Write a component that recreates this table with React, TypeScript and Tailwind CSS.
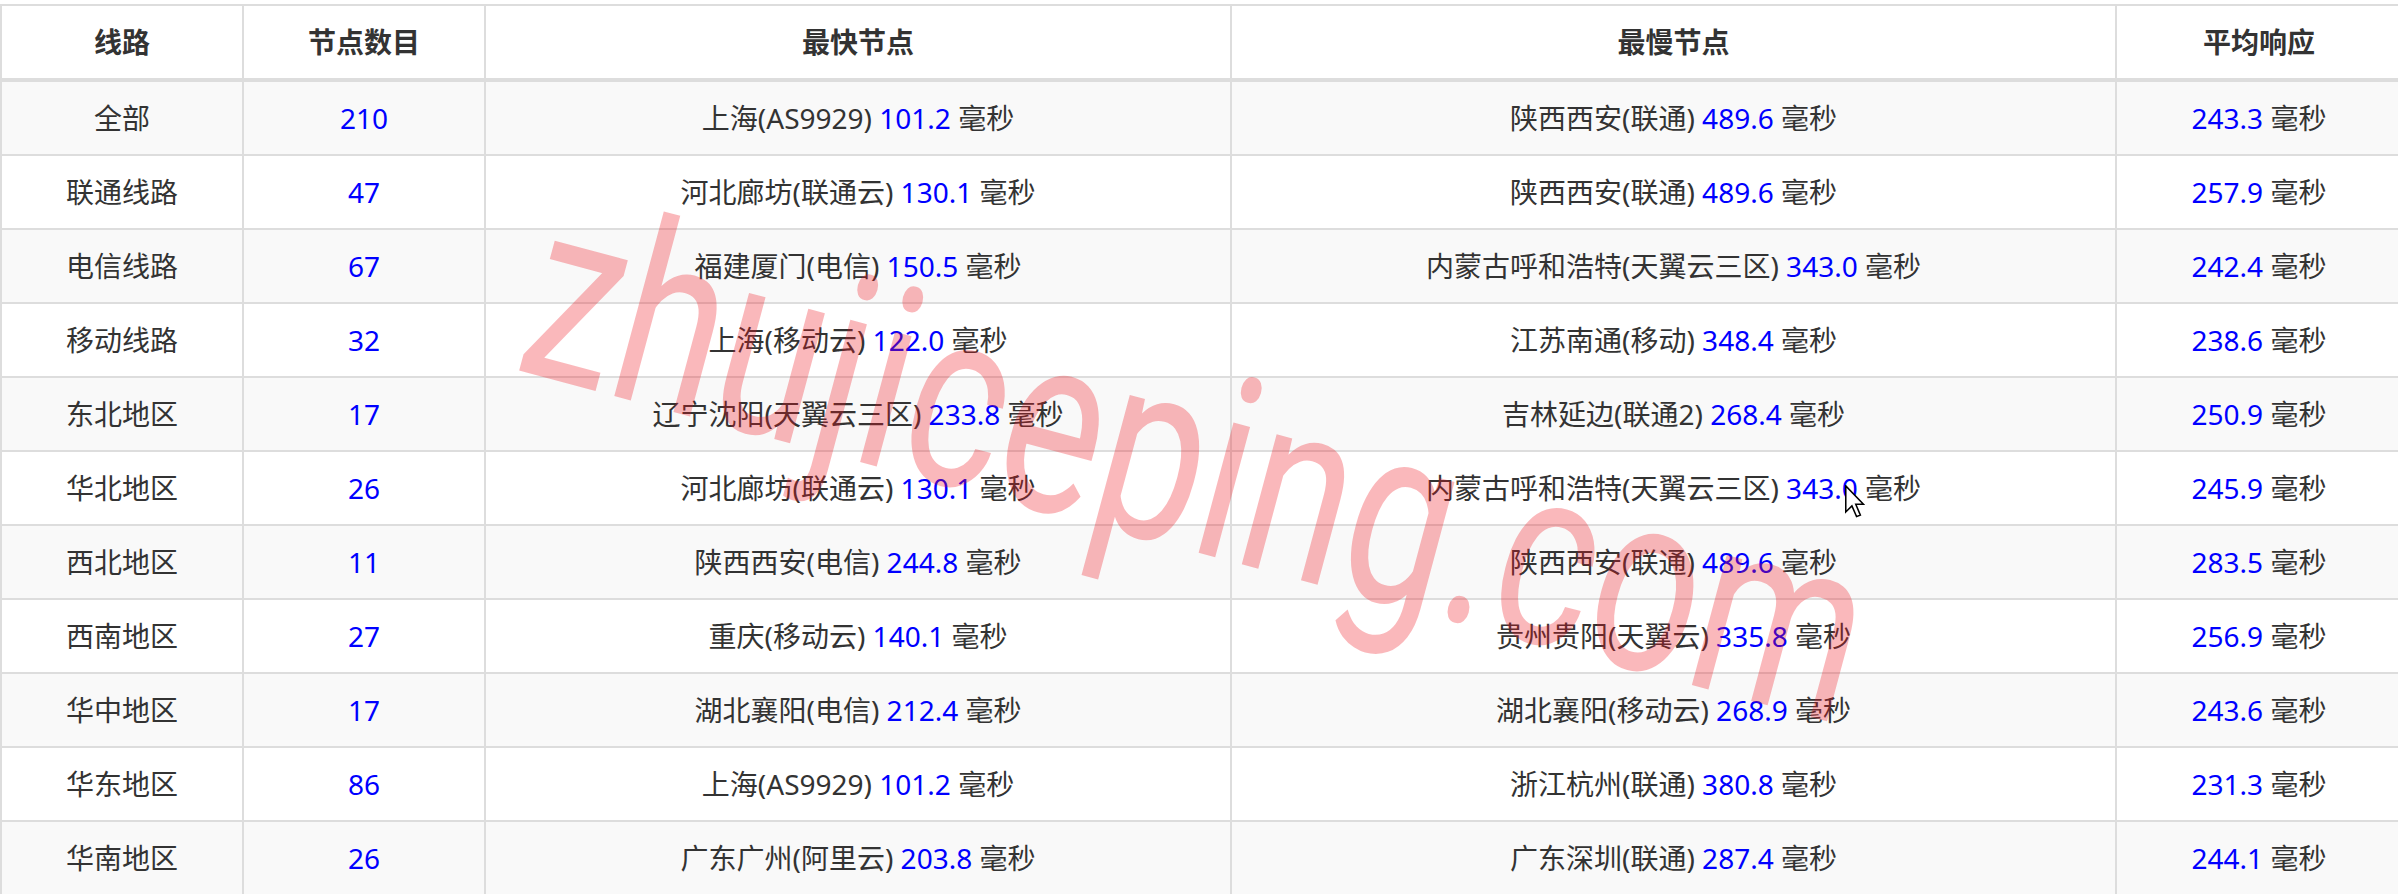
import React from "react";

type Row = {
  name: string;
  count: number;
  fastNode: string;
  fastMs: string;
  slowNode: string;
  slowMs: string;
  avg: string;
};

const rows: Row[] = [
  { name: "全部", count: 210, fastNode: "上海(AS9929)", fastMs: "101.2", slowNode: "陕西西安(联通)", slowMs: "489.6", avg: "243.3" },
  { name: "联通线路", count: 47, fastNode: "河北廊坊(联通云)", fastMs: "130.1", slowNode: "陕西西安(联通)", slowMs: "489.6", avg: "257.9" },
  { name: "电信线路", count: 67, fastNode: "福建厦门(电信)", fastMs: "150.5", slowNode: "内蒙古呼和浩特(天翼云三区)", slowMs: "343.0", avg: "242.4" },
  { name: "移动线路", count: 32, fastNode: "上海(移动云)", fastMs: "122.0", slowNode: "江苏南通(移动)", slowMs: "348.4", avg: "238.6" },
  { name: "东北地区", count: 17, fastNode: "辽宁沈阳(天翼云三区)", fastMs: "233.8", slowNode: "吉林延边(联通2)", slowMs: "268.4", avg: "250.9" },
  { name: "华北地区", count: 26, fastNode: "河北廊坊(联通云)", fastMs: "130.1", slowNode: "内蒙古呼和浩特(天翼云三区)", slowMs: "343.0", avg: "245.9" },
  { name: "西北地区", count: 11, fastNode: "陕西西安(电信)", fastMs: "244.8", slowNode: "陕西西安(联通)", slowMs: "489.6", avg: "283.5" },
  { name: "西南地区", count: 27, fastNode: "重庆(移动云)", fastMs: "140.1", slowNode: "贵州贵阳(天翼云)", slowMs: "335.8", avg: "256.9" },
  { name: "华中地区", count: 17, fastNode: "湖北襄阳(电信)", fastMs: "212.4", slowNode: "湖北襄阳(移动云)", slowMs: "268.9", avg: "243.6" },
  { name: "华东地区", count: 86, fastNode: "上海(AS9929)", fastMs: "101.2", slowNode: "浙江杭州(联通)", slowMs: "380.8", avg: "231.3" },
  { name: "华南地区", count: 26, fastNode: "广东广州(阿里云)", fastMs: "203.8", slowNode: "广东深圳(联通)", slowMs: "287.4", avg: "244.1" },
];

function Ms({ value }: { value: string }) {
  return (
    <>
      <span className="text-[#0000ff]">{value}</span> 毫秒
    </>
  );
}

export default function App() {
  const th = "border-t-2 border-r-2 border-b-4 border-[#dddddd] py-[15px] font-bold leading-[42px]";
  const td = "border-r-2 border-b-2 border-[#dddddd] py-[15px] leading-[42px] whitespace-nowrap";

  return (
    <div className="relative w-full h-[894px] overflow-hidden bg-white pt-1 font-['Noto_Sans','Noto_Sans_CJK_SC',sans-serif] text-[28px] text-[#333333]">
      <table className="w-[2403px] table-fixed border-separate border-spacing-0 text-center">
        <colgroup>
          <col className="w-[244px]" />
          <col className="w-[242px]" />
          <col className="w-[746px]" />
          <col className="w-[885px]" />
          <col className="w-[286px]" />
        </colgroup>
        <thead>
          <tr className="bg-white">
            <th className={th + " border-l-2"}>线路</th>
            <th className={th}>节点数目</th>
            <th className={th}>最快节点</th>
            <th className={th}>最慢节点</th>
            <th className={th}>平均响应</th>
          </tr>
        </thead>
        <tbody>
          {rows.map((r, i) => (
            <tr key={r.name} className={i % 2 === 0 ? "bg-[#f9f9f9]" : "bg-white"}>
              <td className={td + " border-l-2"}>{r.name}</td>
              <td className={td + " text-[#0000ff]"}>{r.count}</td>
              <td className={td}>
                {r.fastNode} <Ms value={r.fastMs} />
              </td>
              <td className={td}>
                {r.slowNode} <Ms value={r.slowMs} />
              </td>
              <td className={td}>
                <Ms value={r.avg} />
              </td>
            </tr>
          ))}
        </tbody>
      </table>

      {/* watermark */}
      <div className="pointer-events-none absolute left-[1198px] top-[462px] -translate-x-1/2 -translate-y-1/2 rotate-[15deg] whitespace-nowrap">
        <div className="scale-x-[0.74] font-['Roboto',sans-serif] font-normal text-[255px] leading-none text-[rgba(240,20,30,0.3)]">
          zhujiceping.com
        </div>
      </div>

      {/* mouse pointer */}
      <svg
        className="pointer-events-none absolute left-[1845px] top-[485px]"
        width="20"
        height="34"
        viewBox="0 0 13 22"
      >
        <path
          d="M0.5 0.5 L0.5 17.5 L4.5 13.5 L7.5 20.5 L10 19.5 L7 12.5 L12 12.5 Z"
          fill="#ffffff"
          stroke="#000000"
          strokeWidth="1"
          strokeLinejoin="miter"
        />
      </svg>
    </div>
  );
}
